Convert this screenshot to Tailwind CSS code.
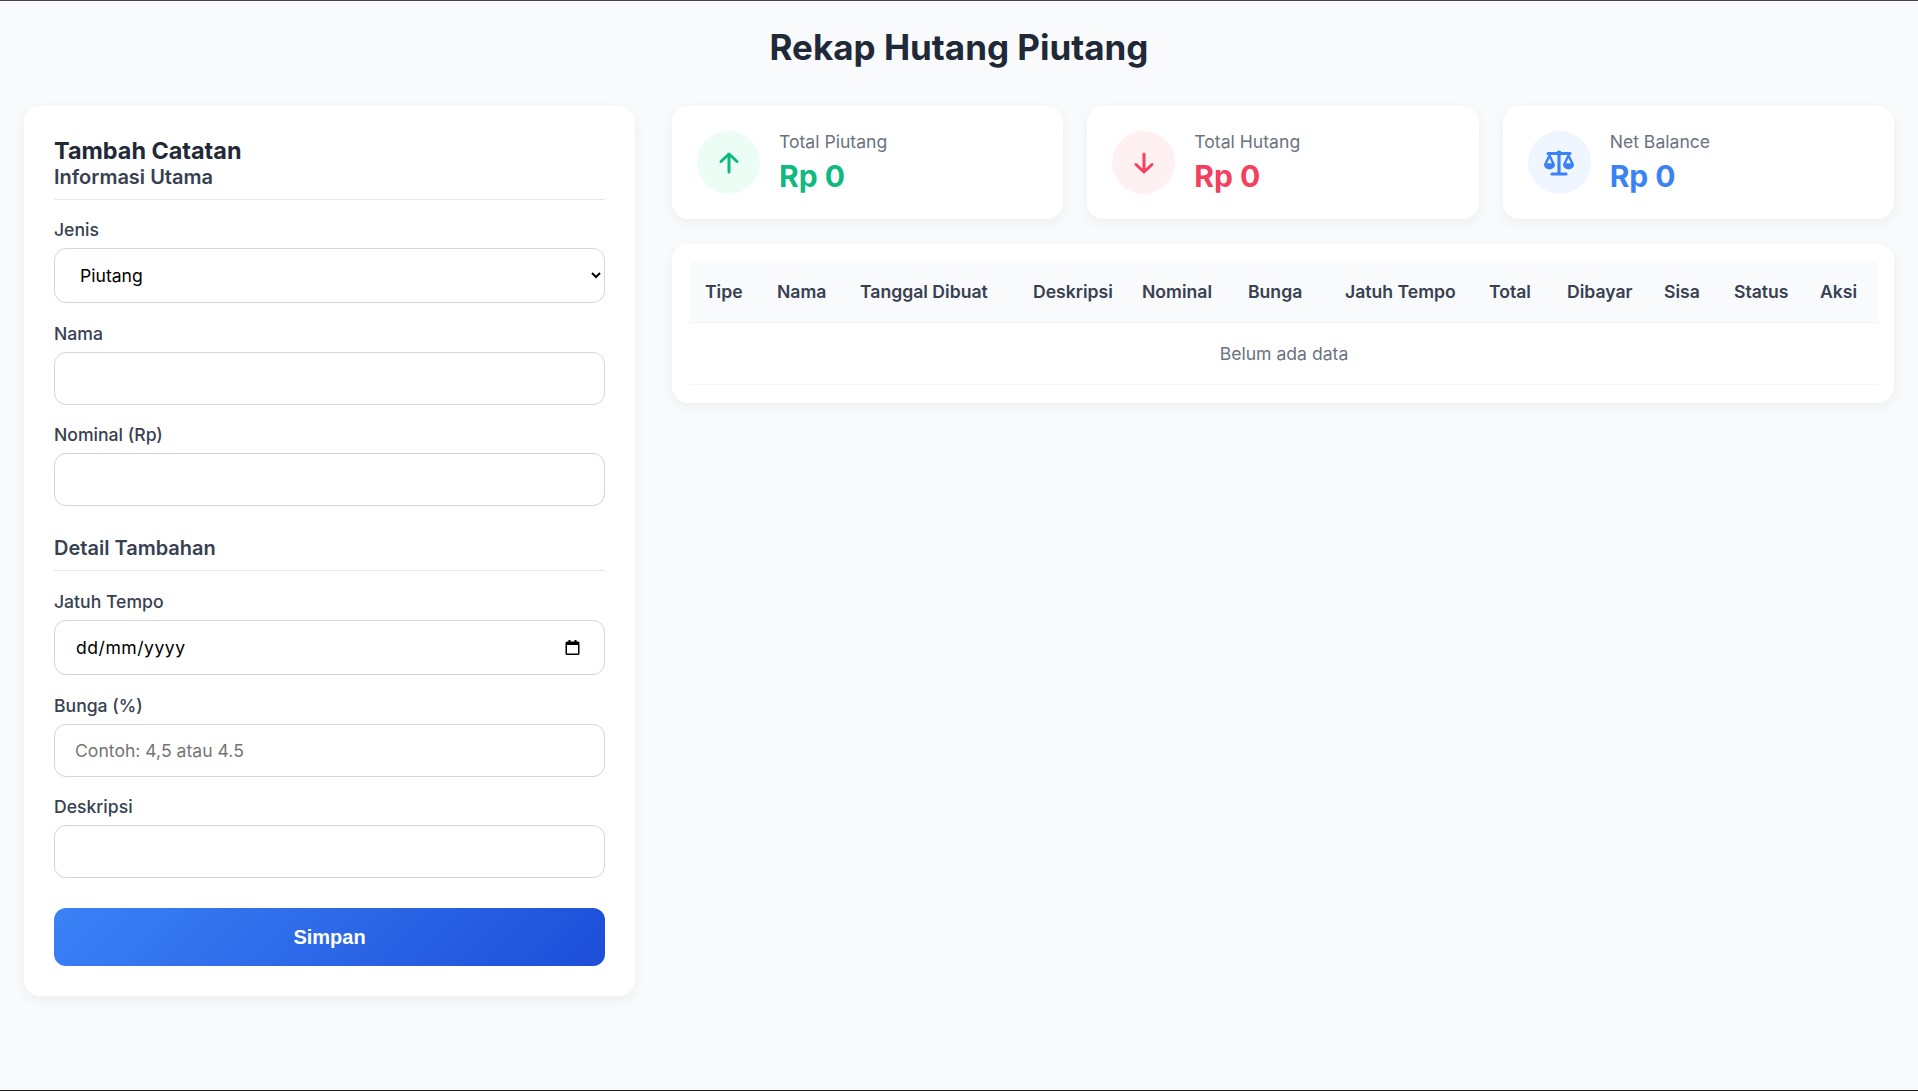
<!DOCTYPE html>
<html lang="id">
<head>
    <meta charset="UTF-8">
    <title>Rekap Hutang Piutang</title>
    <script src="https://cdn.jsdelivr.net/npm/@tailwindcss/browser@4"></script>
</head>
<body class="h-[1091px] overflow-hidden bg-[#f9fafb] border-t border-t-[#4a4145] border-b border-b-[#1f1f1f] font-['Inter','Noto_Sans',sans-serif] text-[#1f2937]">
    <div class="px-6">
        <!-- Judul -->
        <h1 class="h-[105px] pt-[24px] text-center text-[35px] leading-[45px] font-bold">Rekap Hutang Piutang</h1>

        <div class="grid grid-cols-[611px_1fr] gap-[37px] items-start">
            <!-- Form -->
            <form class="bg-white rounded-2xl p-[30px] shadow-[0_4px_14px_rgba(0,0,0,0.05)]">
                <h2 class="text-[23.4px] leading-[29px] font-bold">Tambah Catatan</h2>
                <h3 class="text-[20px] leading-[24px] font-semibold text-[#374151] pb-[10px] border-b border-[#e5e7eb]">Informasi Utama</h3>

                <label class="block mt-[18px] mb-[6px] text-[17.6px] leading-[24px] font-medium text-[#374151]">Jenis</label>
                <select class="block w-full h-[55px] px-[21px] bg-white border border-[#d1d5db] rounded-xl text-[17.6px] text-black">
                    <option>Piutang</option>
                    <option>Hutang</option>
                </select>

                <label class="block mt-[19px] mb-[6px] text-[17.6px] leading-[24px] font-medium text-[#374151]">Nama</label>
                <input type="text" class="block w-full h-[53px] px-[20px] border border-[#d1d5db] rounded-xl text-[17.6px]">

                <label class="block mt-[18px] mb-[6px] text-[17.6px] leading-[24px] font-medium text-[#374151]">Nominal (Rp)</label>
                <input type="text" class="block w-full h-[53px] px-[20px] border border-[#d1d5db] rounded-xl text-[17.6px]">

                <h3 class="mt-[30px] text-[20px] leading-[24px] font-semibold text-[#374151] pb-[10px] border-b border-[#e5e7eb]">Detail Tambahan</h3>

                <label class="block mt-[19px] mb-[6px] text-[17.6px] leading-[24px] font-medium text-[#374151]">Jatuh Tempo</label>
                <!-- format tanggal ditulis manual, locale browser bisa beda -->
                <div class="relative">
                    <input type="text" value="dd/mm/yyyy" class="block w-full h-[55px] px-[21px] border border-[#d1d5db] rounded-xl text-[17.6px] tracking-[0.5px] text-black">
                    <svg class="absolute right-[25px] top-[20px] w-[15px] h-[15px]" viewBox="0 0 15 15" fill="none"><path d="M3.5 0h2v1.5h4V0h2v1.5H13a1.5 1.5 0 0 1 1.5 1.5v10.5A1.5 1.5 0 0 1 13 15H2A1.5 1.5 0 0 1 .5 13.5V3A1.5 1.5 0 0 1 2 1.5h1.5z" fill="#000"/><rect x="2" y="5" width="11" height="8.5" fill="#fff"/></svg>
                </div>

                <label class="block mt-[19px] mb-[6px] text-[17.6px] leading-[24px] font-medium text-[#374151]">Bunga (%)</label>
                <input type="text" placeholder="Contoh: 4,5 atau 4.5" class="block w-full h-[53px] px-[20px] border border-[#d1d5db] rounded-xl text-[17.6px] placeholder:text-[#757575]">

                <label class="block mt-[18px] mb-[6px] text-[17.6px] leading-[24px] font-medium text-[#374151]">Deskripsi</label>
                <input type="text" class="block w-full h-[53px] px-[20px] border border-[#d1d5db] rounded-xl text-[17.6px]">

                <button type="button" class="block w-full h-[58px] mt-[30px] rounded-xl bg-linear-[135deg] from-[#3b82f6] to-[#1d4ed8] text-white text-[20px] font-bold font-['Liberation_Sans',Arial,sans-serif]">Simpan</button>
            </form>

            <div class="flex flex-col gap-[25px]">
                <!-- Ringkasan -->
                <div class="grid grid-cols-3 gap-6">
                    <div class="flex items-center gap-[19px] h-[113px] px-[25px] bg-white rounded-2xl shadow-[0_4px_14px_rgba(0,0,0,0.05)]">
                        <div class="w-[63px] h-[63px] rounded-full bg-[#ecfdf5] flex items-center justify-center">
                            <svg class="w-[24px] h-[26px] text-[#10b981]" viewBox="0 0 24 26" fill="none" stroke="currentColor" stroke-width="3" stroke-linecap="round" stroke-linejoin="round"><path d="M12 22V4M4 11.5l8-7.5 8 7.5"/></svg>
                        </div>
                        <div>
                            <p class="text-[17.6px] leading-[24px] text-[#6b7280]">Total Piutang</p>
                            <p class="mt-[3px] text-[30px] leading-[38px] font-bold text-[#10b981]">Rp 0</p>
                        </div>
                    </div>
                    <div class="flex items-center gap-[19px] h-[113px] px-[25px] bg-white rounded-2xl shadow-[0_4px_14px_rgba(0,0,0,0.05)]">
                        <div class="w-[63px] h-[63px] rounded-full bg-[#fff1f2] flex items-center justify-center">
                            <svg class="w-[24px] h-[26px] text-[#f43f5e]" viewBox="0 0 24 26" fill="none" stroke="currentColor" stroke-width="3" stroke-linecap="round" stroke-linejoin="round"><path d="M12 4v18M4 14.5l8 7.5 8-7.5"/></svg>
                        </div>
                        <div>
                            <p class="text-[17.6px] leading-[24px] text-[#6b7280]">Total Hutang</p>
                            <p class="mt-[3px] text-[30px] leading-[38px] font-bold text-[#f43f5e]">Rp 0</p>
                        </div>
                    </div>
                    <div class="flex items-center gap-[19px] h-[113px] px-[25px] bg-white rounded-2xl shadow-[0_4px_14px_rgba(0,0,0,0.05)]">
                        <div class="w-[63px] h-[63px] rounded-full bg-[#eff6ff] flex items-center justify-center">
                            <svg class="w-[32px] h-[26px] text-[#3b82f6]" viewBox="0 0 32 26" fill="none" stroke="currentColor" stroke-width="2.4" stroke-linejoin="round">
                                <path d="M5 3.5h22" stroke-width="3" stroke-linecap="round"/>
                                <path d="M16 2v21" stroke-width="3.2"/>
                                <path d="M9 24h14" stroke-width="3.2" stroke-linecap="round"/>
                                <circle cx="16" cy="2.8" r="2.4" fill="currentColor" stroke="none"/>
                                <path d="M6.5 5.5L2.2 14.5h8.6z"/>
                                <path d="M1 14.5h11a5.5 5 0 0 1-11 0z" fill="currentColor" stroke="none"/>
                                <path d="M25.5 5.5L21.2 14.5h8.6z"/>
                                <path d="M20 14.5h11a5.5 5 0 0 1-11 0z" fill="currentColor" stroke="none"/>
                            </svg>
                        </div>
                        <div>
                            <p class="text-[17.6px] leading-[24px] text-[#6b7280]">Net Balance</p>
                            <p class="mt-[3px] text-[30px] leading-[38px] font-bold text-[#3b82f6]">Rp 0</p>
                        </div>
                    </div>
                </div>

                <!-- Tabel -->
                <div class="bg-white rounded-2xl pt-[17px] pl-[18px] pr-[16px] pb-[18px] shadow-[0_4px_14px_rgba(0,0,0,0.05)]">
                    <table class="w-full table-fixed border-collapse text-[17.6px]">
                        <thead>
                            <tr class="h-[61px] bg-[#f9fafb] border-b border-[#f3f4f6] text-left text-[#374151]">
                                <th class="w-[72px] pl-[15px] pt-[2px] font-semibold">Tipe</th>
                                <th class="w-[83px] pl-[15px] pt-[2px] font-semibold">Nama</th>
                                <th class="w-[173px] pl-[15px] pt-[2px] font-semibold">Tanggal Dibuat</th>
                                <th class="w-[109px] pl-[15px] pt-[2px] font-semibold">Deskripsi</th>
                                <th class="w-[106px] pl-[15px] pt-[2px] font-semibold">Nominal</th>
                                <th class="w-[97px] pl-[15px] pt-[2px] font-semibold">Bunga</th>
                                <th class="w-[144px] pl-[15px] pt-[2px] font-semibold">Jatuh Tempo</th>
                                <th class="w-[78px] pl-[15px] pt-[2px] font-semibold">Total</th>
                                <th class="w-[97px] pl-[15px] pt-[2px] font-semibold">Dibayar</th>
                                <th class="w-[70px] pl-[15px] pt-[2px] font-semibold">Sisa</th>
                                <th class="w-[86px] pl-[15px] pt-[2px] font-semibold">Status</th>
                                <th class="pl-[15px] pt-[2px] font-semibold">Aksi</th>
                            </tr>
                        </thead>
                        <tbody>
                            <tr class="h-[62px] border-b border-[#f3f4f6]">
                                <td colspan="12" class="pt-[2px] text-center text-[#6b7280]">Belum ada data</td>
                            </tr>
                        </tbody>
                    </table>
                </div>
            </div>
        </div>
    </div>
</body>
</html>
